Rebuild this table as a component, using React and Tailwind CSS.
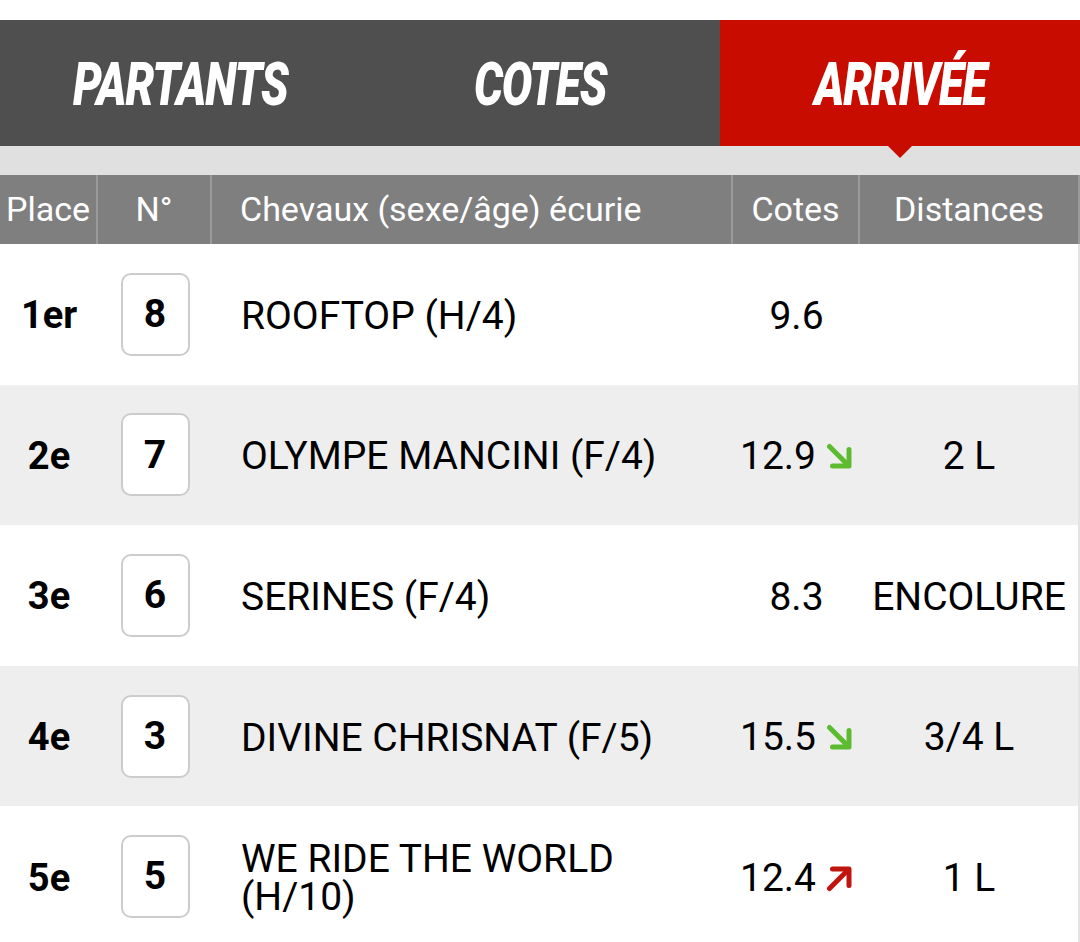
import React from "react";

const rows = [
  { place: "1er", num: "8", name: "ROOFTOP (H/4)", cote: "9.6", trend: null, dist: "" },
  { place: "2e", num: "7", name: "OLYMPE MANCINI (F/4)", cote: "12.9", trend: "down", dist: "2 L" },
  { place: "3e", num: "6", name: "SERINES (F/4)", cote: "8.3", trend: null, dist: "ENCOLURE" },
  { place: "4e", num: "3", name: "DIVINE CHRISNAT (F/5)", cote: "15.5", trend: "down", dist: "3/4 L" },
  { place: "5e", num: "5", name: "WE RIDE THE WORLD (H/10)", cote: "12.4", trend: "up", dist: "1 L" },
];

function Trend({ dir }) {
  if (dir === "down") {
    return (
      <svg width="27" height="27" viewBox="0 0 27 27" className="ml-[10px]">
        <path d="M3.5 3.5 L21 21" stroke="#5dbb2f" strokeWidth="5" strokeLinecap="round" fill="none" />
        <path d="M6.5 23 L23 23 L23 6.5" stroke="#5dbb2f" strokeWidth="5" strokeLinecap="round" strokeLinejoin="round" fill="none" />
      </svg>
    );
  }
  return (
    <svg width="27" height="27" viewBox="0 0 27 27" className="ml-[10px]">
      <path d="M3.5 23.5 L21 6" stroke="#c0140f" strokeWidth="5" strokeLinecap="round" fill="none" />
      <path d="M6.5 4 L23 4 L23 20.5" stroke="#c0140f" strokeWidth="5" strokeLinecap="round" strokeLinejoin="round" fill="none" />
    </svg>
  );
}

function Tab({ label, active }) {
  return (
    <div
      className={
        "relative flex-1 flex items-center justify-center " +
        (active ? "bg-[#c80c00]" : "bg-[#4f4f4f]")
      }
    >
      <span className="inline-block text-white font-black italic text-[60px] leading-none scale-x-[0.76] tracking-tight translate-y-[2px]">
        {label}
      </span>
      {active && (
        <div className="absolute left-1/2 -translate-x-1/2 top-full w-0 h-0 border-l-[12px] border-r-[12px] border-t-[12px] border-l-transparent border-r-transparent border-t-[#c80c00]" />
      )}
    </div>
  );
}

export default function App() {
  const cols = "grid grid-cols-[98px_114px_521px_127px_218px]";
  return (
    <div className="w-[1080px] h-[942px] overflow-hidden bg-white font-['Roboto',sans-serif] text-black">
      <div className="h-[20px]" />
      <div className="flex h-[126px]">
        <Tab label="PARTANTS" />
        <Tab label="COTES" />
        <Tab label="ARRIVÉE" active />
      </div>
      <div className="h-[29px] bg-[#e0e0e0]" />

      <div className={cols + " h-[69px] bg-[#7f7f7f] text-white text-[34px] border-r-2 border-[#9a9a9a]"}>
        <div className="flex items-center justify-center border-r-2 border-[#9a9a9a]">Place</div>
        <div className="flex items-center justify-center border-r-2 border-[#9a9a9a]">N°</div>
        <div className="flex items-center pl-[28px] border-r-2 border-[#9a9a9a]">Chevaux (sexe/âge) écurie</div>
        <div className="flex items-center justify-center border-r-2 border-[#9a9a9a]">Cotes</div>
        <div className="flex items-center justify-center">Distances</div>
      </div>

      {rows.map((r, i) => (
        <div
          key={i}
          className={
            cols +
            " h-[140.6px] border-r-2 border-[#e4e4e4] " +
            (i % 2 === 1 ? "bg-[#eeeeee]" : "bg-white")
          }
        >
          <div className="flex items-center justify-center font-bold text-[38px] pt-[3px]">{r.place}</div>
          <div className="flex items-center justify-center">
            <div className="w-[69px] h-[83px] rounded-[10px] border-2 border-[#cccccc] bg-white flex items-center justify-center font-bold text-[39px]">
              {r.num}
            </div>
          </div>
          <div className="flex items-center pl-[29px] pr-[40px] pt-[3px] text-[39px] leading-[38px]">{r.name}</div>
          <div className="flex items-center justify-center text-[39px] pt-[3px]">
            <span>{r.cote}</span>
            {r.trend && <Trend dir={r.trend} />}
          </div>
          <div className="flex items-center justify-center text-[39px] pt-[3px]">{r.dist}</div>
        </div>
      ))}
    </div>
  );
}
